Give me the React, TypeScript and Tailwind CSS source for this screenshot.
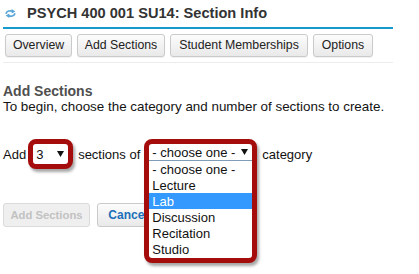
import { useState } from "react";

// Options shown in the open category dropdown
const categories = [
  "- choose one -",
  "Lecture",
  "Lab",
  "Discussion",
  "Recitation",
  "Studio",
];

const navButtons = [
  { label: "Overview", width: "w-[67px]" },
  { label: "Add Sections", width: "w-[88px]" },
  { label: "Student Memberships", width: "w-[138px]" },
  { label: "Options", width: "w-[60px]" },
];

function SyncIcon() {
  return (
    <svg width="11" height="11" viewBox="0 0 11 11" fill="none">
      <path
        d="M1.2 5.2 C1.8 3 5 2.2 7.6 3.3"
        stroke="#5aa6d8"
        strokeWidth="1.7"
        strokeLinecap="round"
      />
      <path d="M10.4 3.6 L6.6 1 L6.6 5.6 Z" fill="#5aa6d8" />
      <path
        d="M9.8 5.8 C9.2 8 6 8.8 3.4 7.7"
        stroke="#5aa6d8"
        strokeWidth="1.7"
        strokeLinecap="round"
      />
      <path d="M0.6 7.4 L4.4 10 L4.4 5.4 Z" fill="#5aa6d8" />
    </svg>
  );
}

function Caret() {
  return (
    <svg width="7" height="6" viewBox="0 0 7 6">
      <path d="M0 0 H7 L3.5 6 Z" fill="#111" />
    </svg>
  );
}

export default function App() {
  const [selected] = useState("Lab");

  return (
    <div className="w-[419px] h-[274px] bg-white overflow-hidden font-['Liberation_Sans',Arial,sans-serif] text-[#111]">
      <div className="w-[393px] pl-[3px]">
        {/* header */}
        <div className="h-[27px] flex items-center gap-[11px] pl-[2px] pb-[1px]">
          <SyncIcon />
          <h1 className="text-[14.6px] font-bold text-[#333] leading-none">
            PSYCH 400 001 SU14: Section Info
          </h1>
        </div>
        <div className="h-[2px] bg-[#1699cc]" />

        {/* nav */}
        <div className="pt-[5px] pb-[5px] pl-[2px] border-b border-[#ececec] flex gap-[5px]">
          {navButtons.map((b) => (
            <button
              key={b.label}
              className={`${b.width} h-[23px] flex items-center justify-center rounded-[3px] border border-[#cacaca] bg-gradient-to-b from-[#fcfcfc] to-[#e9e9e9] text-[12.3px] text-[#222] shadow-[0_1px_1px_rgba(0,0,0,0.06)]`}
            >
              {b.label}
            </button>
          ))}
        </div>

        {/* content */}
        <h2 className="mt-[20px] text-[14px] leading-[16px] font-bold text-[#4f4f4f]">
          Add Sections
        </h2>
        <p className="text-[13.4px] leading-[15px] text-[#141414]">
          To begin, choose the category and number of sections to create.
        </p>

        <div className="mt-[25px] h-[30px] flex items-center text-[13px] leading-[15px]">
          <span>Add</span>
          <div className="ml-[2px] w-[45px] h-[30px] rounded-[8px] border-[5px] border-[#a50d0d] bg-white shadow-[2px_3px_3px_rgba(0,0,0,0.35)] flex items-center justify-between pl-[3px] pr-[4px]">
            <span>3</span>
            <Caret />
          </div>
          <span className="ml-[5px]">sections of</span>
          <div className="ml-[4px] w-[113px] h-[30px] relative">
            <div className="absolute left-0 top-0 z-10 w-[113px] h-[124px] rounded-[8px] border-[5px] border-[#a50d0d] bg-white shadow-[2px_3px_3px_rgba(0,0,0,0.35)] flex flex-col overflow-hidden">
              <div className="h-[17px] flex items-center justify-between pl-[3px] pr-[4px] border-b border-[#7f9db9]">
                <span>- choose one -</span>
                <Caret />
              </div>
              <ul>
                {categories.map((c) => (
                  <li
                    key={c}
                    className={`h-[16px] pl-[3px] flex items-center ${
                      c === selected ? "bg-[#3399ff] text-white" : ""
                    }`}
                  >
                    {c}
                  </li>
                ))}
              </ul>
            </div>
          </div>
          <span className="ml-[5px]">category</span>
        </div>

        <div className="mt-[34px] flex gap-[7px]">
          <button className="w-[87px] h-[24px] flex items-center justify-center rounded-[3px] border border-[#dadada] bg-[#efefef] text-[11.3px] font-bold text-[#c2c2c2]">
            Add Sections
          </button>
          <button className="w-[62px] h-[24px] flex items-center justify-center rounded-[3px] border border-[#cacaca] bg-gradient-to-b from-[#fcfcfc] to-[#e9e9e9] text-[12px] font-bold text-[#1d6fb8]">
            Cancel
          </button>
        </div>
      </div>
    </div>
  );
}
